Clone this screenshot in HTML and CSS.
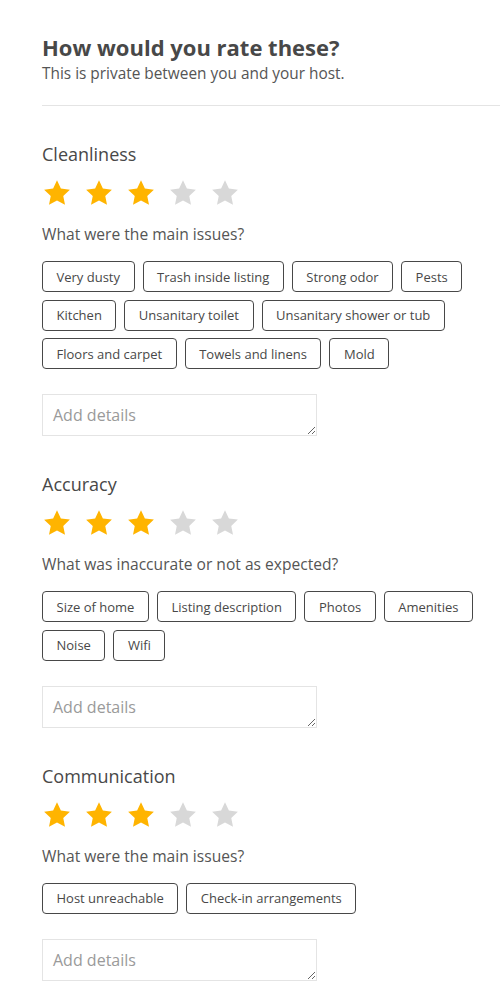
FILE: index.html
```html
<!DOCTYPE html>
<html>
<head>
<meta charset="utf-8">
<link rel="stylesheet" href="styles.css">
</head>
<body>
<div class="page">
  <header class="intro">
    <h1 class="title">How would you rate these?</h1>
    <p class="subtitle">This is private between you and your host.</p>
  </header>
  <hr class="divider">

  <section class="category">
    <h2 class="cat-title">Cleanliness</h2>
    <div class="stars">
      <svg class="star on" viewBox="0 0 24 24"><path d="M12 1.8l3.1 6.6 7.2.9-5.3 5 1.4 7.1L12 17.9l-6.4 3.5L7 14.3l-5.3-5 7.2-.9z"/></svg>
      <svg class="star on" viewBox="0 0 24 24"><path d="M12 1.8l3.1 6.6 7.2.9-5.3 5 1.4 7.1L12 17.9l-6.4 3.5L7 14.3l-5.3-5 7.2-.9z"/></svg>
      <svg class="star on" viewBox="0 0 24 24"><path d="M12 1.8l3.1 6.6 7.2.9-5.3 5 1.4 7.1L12 17.9l-6.4 3.5L7 14.3l-5.3-5 7.2-.9z"/></svg>
      <svg class="star" viewBox="0 0 24 24"><path d="M12 1.8l3.1 6.6 7.2.9-5.3 5 1.4 7.1L12 17.9l-6.4 3.5L7 14.3l-5.3-5 7.2-.9z"/></svg>
      <svg class="star" viewBox="0 0 24 24"><path d="M12 1.8l3.1 6.6 7.2.9-5.3 5 1.4 7.1L12 17.9l-6.4 3.5L7 14.3l-5.3-5 7.2-.9z"/></svg>
    </div>
    <p class="question">What were the main issues?</p>
    <div class="chips">
      <span class="chip">Very dusty</span>
      <span class="chip">Trash inside listing</span>
      <span class="chip">Strong odor</span>
      <span class="chip">Pests</span>
      <span class="chip">Kitchen</span>
      <span class="chip">Unsanitary toilet</span>
      <span class="chip">Unsanitary shower or tub</span>
      <span class="chip">Floors and carpet</span>
      <span class="chip">Towels and linens</span>
      <span class="chip">Mold</span>
    </div>
    <textarea class="details" placeholder="Add details"></textarea>
  </section>

  <section class="category">
    <h2 class="cat-title">Accuracy</h2>
    <div class="stars">
      <svg class="star on" viewBox="0 0 24 24"><path d="M12 1.8l3.1 6.6 7.2.9-5.3 5 1.4 7.1L12 17.9l-6.4 3.5L7 14.3l-5.3-5 7.2-.9z"/></svg>
      <svg class="star on" viewBox="0 0 24 24"><path d="M12 1.8l3.1 6.6 7.2.9-5.3 5 1.4 7.1L12 17.9l-6.4 3.5L7 14.3l-5.3-5 7.2-.9z"/></svg>
      <svg class="star on" viewBox="0 0 24 24"><path d="M12 1.8l3.1 6.6 7.2.9-5.3 5 1.4 7.1L12 17.9l-6.4 3.5L7 14.3l-5.3-5 7.2-.9z"/></svg>
      <svg class="star" viewBox="0 0 24 24"><path d="M12 1.8l3.1 6.6 7.2.9-5.3 5 1.4 7.1L12 17.9l-6.4 3.5L7 14.3l-5.3-5 7.2-.9z"/></svg>
      <svg class="star" viewBox="0 0 24 24"><path d="M12 1.8l3.1 6.6 7.2.9-5.3 5 1.4 7.1L12 17.9l-6.4 3.5L7 14.3l-5.3-5 7.2-.9z"/></svg>
    </div>
    <p class="question">What was inaccurate or not as expected?</p>
    <div class="chips">
      <span class="chip">Size of home</span>
      <span class="chip">Listing description</span>
      <span class="chip">Photos</span>
      <span class="chip">Amenities</span>
      <span class="chip">Noise</span>
      <span class="chip">Wifi</span>
    </div>
    <textarea class="details" placeholder="Add details"></textarea>
  </section>

  <section class="category">
    <h2 class="cat-title">Communication</h2>
    <div class="stars">
      <svg class="star on" viewBox="0 0 24 24"><path d="M12 1.8l3.1 6.6 7.2.9-5.3 5 1.4 7.1L12 17.9l-6.4 3.5L7 14.3l-5.3-5 7.2-.9z"/></svg>
      <svg class="star on" viewBox="0 0 24 24"><path d="M12 1.8l3.1 6.6 7.2.9-5.3 5 1.4 7.1L12 17.9l-6.4 3.5L7 14.3l-5.3-5 7.2-.9z"/></svg>
      <svg class="star on" viewBox="0 0 24 24"><path d="M12 1.8l3.1 6.6 7.2.9-5.3 5 1.4 7.1L12 17.9l-6.4 3.5L7 14.3l-5.3-5 7.2-.9z"/></svg>
      <svg class="star" viewBox="0 0 24 24"><path d="M12 1.8l3.1 6.6 7.2.9-5.3 5 1.4 7.1L12 17.9l-6.4 3.5L7 14.3l-5.3-5 7.2-.9z"/></svg>
      <svg class="star" viewBox="0 0 24 24"><path d="M12 1.8l3.1 6.6 7.2.9-5.3 5 1.4 7.1L12 17.9l-6.4 3.5L7 14.3l-5.3-5 7.2-.9z"/></svg>
    </div>
    <p class="question">What were the main issues?</p>
    <div class="chips">
      <span class="chip">Host unreachable</span>
      <span class="chip">Check-in arrangements</span>
    </div>
    <textarea class="details" placeholder="Add details"></textarea>
  </section>
</div>
</body>
</html>
```
FILE: styles.css
```css
html, body {
  margin: 0;
  padding: 0;
  background: #ffffff;
}
body {
  font-family: "Open Sans", "Liberation Sans", sans-serif;
  color: #484848;
}
.page {
  padding: 34px 0 0 42px;
}
.title {
  margin: 0;
  font-size: 22px;
  line-height: 26px;
  font-weight: 700;
  color: #484848;
}
.subtitle {
  margin: 4px 0 0;
  font-size: 15.4px;
  line-height: 20px;
  font-weight: 400;
  color: #555555;
}
.divider {
  margin: 21px 0 0;
  border: 0;
  border-top: 1px solid #e4e4e4;
  height: 0;
}
.category {
  padding-top: 36px;
}
.cat-title {
  margin: 0;
  font-size: 18px;
  line-height: 24px;
  font-weight: 400;
  color: #484848;
}
.stars {
  display: flex;
  gap: 12px;
  margin-top: 12px;
  height: 30px;
}
.star {
  width: 30px;
  height: 30px;
  fill: #d8d8d8;
}
.star.on {
  fill: #ffb400;
}
.question {
  margin: 15px 0 0;
  font-size: 15.6px;
  line-height: 22px;
  font-weight: 400;
  color: #555555;
}
.chips {
  display: flex;
  flex-wrap: wrap;
  gap: 7.5px 8px;
  margin-top: 16px;
  padding-right: 20px;
}
.chip {
  box-sizing: border-box;
  height: 31px;
  display: inline-flex;
  align-items: center;
  padding: 0 13.5px;
  border: 1px solid #484848;
  border-radius: 4px;
  font-size: 13px;
  color: #484848;
}
.details {
  display: block;
  box-sizing: border-box;
  margin-top: 25px;
  width: 275px;
  height: 42px;
  padding: 9px 10px;
  border: 1px solid #e4e4e4;
  border-radius: 0;
  font-family: inherit;
  font-size: 16px;
  line-height: 22px;
  font-weight: 400;
  color: #484848;
  resize: vertical;
}
.details::placeholder {
  color: #9a9a9a;
}
```
